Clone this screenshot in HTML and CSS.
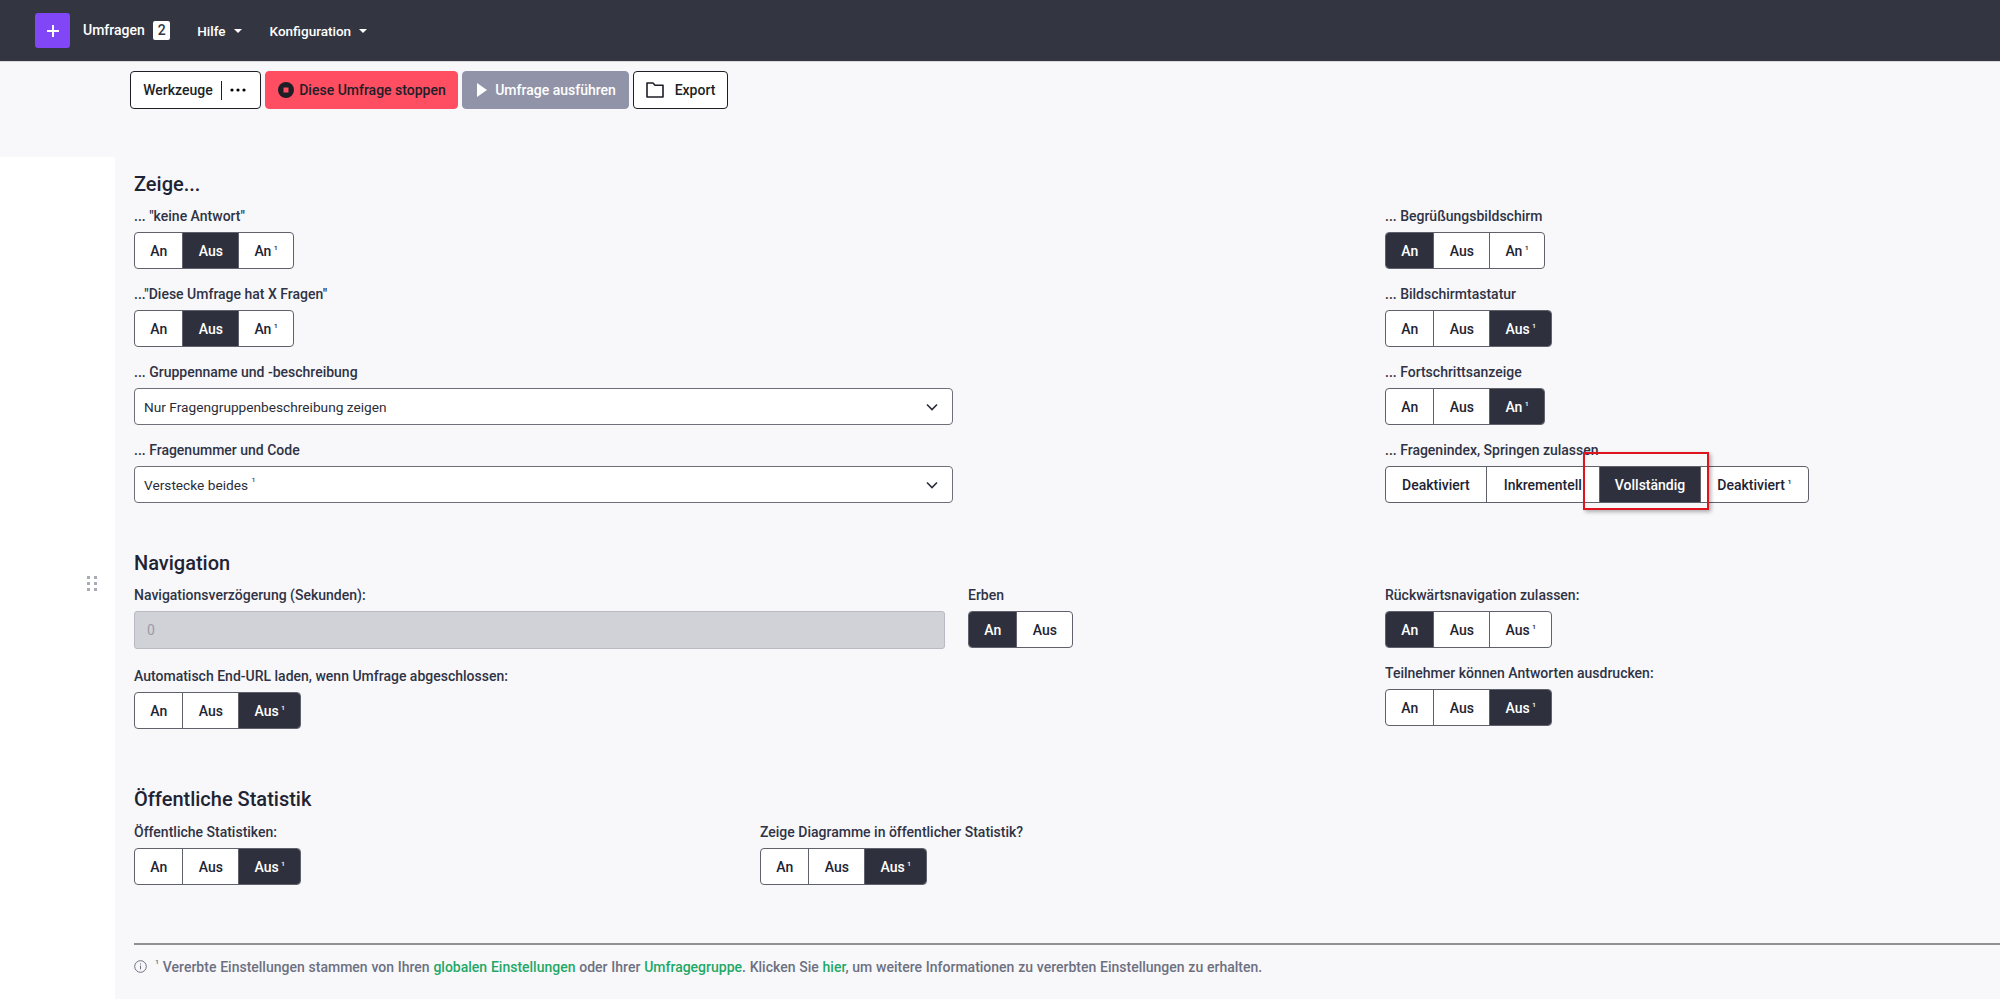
FILE: index.html
```html
<!DOCTYPE html>
<html lang="de">
<head>
    <meta charset="UTF-8">
    <title>Umfrage - Präsentation</title>
    <link rel="stylesheet" href="styles.css">
</head>
<body>
    <header class="topbar">
        <button class="add-btn" type="button">
            <svg width="14" height="14" viewBox="0 0 14 14"><path d="M7 1v12M1 7h12" stroke="#fff" stroke-width="2"/></svg>
        </button>
        <a class="nav-link nav-first">Umfragen <span class="count">2</span></a>
        <a class="nav-link nav-drop">Hilfe</a>
        <a class="nav-link nav-drop">Konfiguration</a>
    </header>

    <div class="toolbar">
        <button class="tool tool-outline tool-menu" type="button">
            <span>Werkzeuge</span>
            <span class="tool-sep"></span>
            <svg width="16" height="4" viewBox="0 0 16 4"><circle cx="2" cy="2" r="1.6"/><circle cx="8" cy="2" r="1.6"/><circle cx="14" cy="2" r="1.6"/></svg>
        </button>
        <button class="tool tool-stop" type="button">
            <svg width="16" height="16" viewBox="0 0 16 16"><circle cx="8" cy="8" r="8" fill="#1d1f27"/><rect x="5.5" y="5.5" width="5" height="5" fill="#ff4d62"/></svg>
            Diese Umfrage stoppen
        </button>
        <button class="tool tool-run" type="button">
            <svg width="10" height="14" viewBox="0 0 10 14"><path d="M0 0l10 7-10 7z" fill="#fff"/></svg>
            Umfrage ausführen
        </button>
        <button class="tool tool-outline tool-export" type="button">
            <svg width="18" height="16" viewBox="0 0 18 16"><path d="M1 1h6l2 2.2h8V15H1z" fill="none" stroke="#1d1f27" stroke-width="1.6" stroke-linejoin="round"/></svg>
            Export
        </button>
    </div>

    <div class="workspace">
        <aside class="side">
            <svg class="drag" width="10" height="15" viewBox="0 0 10 15"><g fill="#a9abb5"><rect width="3" height="3"/><rect x="7" width="3" height="3"/><rect y="6" width="3" height="3"/><rect x="7" y="6" width="3" height="3"/><rect y="12" width="3" height="3"/><rect x="7" y="12" width="3" height="3"/></g></svg>
        </aside>
        <main class="content">
            <h2 class="section-title">Zeige...</h2>
            <section class="grid grid-show">
                <div class="col">
                    <div class="field">
                        <label>... "keine Antwort"</label>
                        <div class="btn-group"><span class="opt">An</span><span class="opt on">Aus</span><span class="opt">An <i>¹</i></span></div>
                    </div>
                    <div class="field">
                        <label>..."Diese Umfrage hat X Fragen"</label>
                        <div class="btn-group"><span class="opt">An</span><span class="opt on">Aus</span><span class="opt">An <i>¹</i></span></div>
                    </div>
                    <div class="field">
                        <label>... Gruppenname und -beschreibung</label>
                        <div class="select">Nur Fragengruppenbeschreibung zeigen
                            <svg width="12" height="8" viewBox="0 0 12 8"><path d="M1 1.5l5 5 5-5" fill="none" stroke="#2a2d38" stroke-width="1.6"/></svg>
                        </div>
                    </div>
                    <div class="field">
                        <label>... Fragenummer und Code</label>
                        <div class="select"><span>Verstecke beides <i>¹</i></span>
                            <svg width="12" height="8" viewBox="0 0 12 8"><path d="M1 1.5l5 5 5-5" fill="none" stroke="#2a2d38" stroke-width="1.6"/></svg>
                        </div>
                    </div>
                </div>
                <div class="col">
                    <div class="field">
                        <label>... Begrüßungsbildschirm</label>
                        <div class="btn-group"><span class="opt on">An</span><span class="opt">Aus</span><span class="opt">An <i>¹</i></span></div>
                    </div>
                    <div class="field">
                        <label>... Bildschirmtastatur</label>
                        <div class="btn-group"><span class="opt">An</span><span class="opt">Aus</span><span class="opt on">Aus <i>¹</i></span></div>
                    </div>
                    <div class="field">
                        <label>... Fortschrittsanzeige</label>
                        <div class="btn-group"><span class="opt">An</span><span class="opt">Aus</span><span class="opt on">An <i>¹</i></span></div>
                    </div>
                    <div class="field field-index">
                        <label>... Fragenindex, Springen zulassen</label>
                        <div class="btn-group btn-group-wide"><span class="opt">Deaktiviert</span><span class="opt opt-loose">Inkrementell</span><span class="opt opt-tight on">Vollständig</span><span class="opt">Deaktiviert <i>¹</i></span></div>
                        <div class="highlight"></div>
                    </div>
                </div>
            </section>

            <h2 class="section-title title-nav">Navigation</h2>
            <section class="grid grid-nav">
                <div class="col">
                    <div class="field field-input">
                        <label>Navigationsverzögerung (Sekunden):</label>
                        <div class="input-off">0</div>
                    </div>
                    <div class="field">
                        <label>Automatisch End-URL laden, wenn Umfrage abgeschlossen:</label>
                        <div class="btn-group"><span class="opt">An</span><span class="opt">Aus</span><span class="opt on">Aus <i>¹</i></span></div>
                    </div>
                </div>
                <div class="col">
                    <div class="field">
                        <label>Erben</label>
                        <div class="btn-group"><span class="opt on">An</span><span class="opt">Aus</span></div>
                    </div>
                </div>
                <div class="col">
                    <div class="field">
                        <label>Rückwärtsnavigation zulassen:</label>
                        <div class="btn-group"><span class="opt on">An</span><span class="opt">Aus</span><span class="opt">Aus <i>¹</i></span></div>
                    </div>
                    <div class="field">
                        <label>Teilnehmer können Antworten ausdrucken:</label>
                        <div class="btn-group"><span class="opt">An</span><span class="opt">Aus</span><span class="opt on">Aus <i>¹</i></span></div>
                    </div>
                </div>
            </section>

            <h2 class="section-title title-stats">Öffentliche Statistik</h2>
            <section class="grid grid-stats">
                <div class="field">
                    <label>Öffentliche Statistiken:</label>
                    <div class="btn-group"><span class="opt">An</span><span class="opt">Aus</span><span class="opt on">Aus <i>¹</i></span></div>
                </div>
                <div class="field">
                    <label>Zeige Diagramme in öffentlicher Statistik?</label>
                    <div class="btn-group"><span class="opt">An</span><span class="opt">Aus</span><span class="opt on">Aus <i>¹</i></span></div>
                </div>
            </section>

            <footer class="note">
                <svg width="13" height="13" viewBox="0 0 13 13"><circle cx="6.5" cy="6.5" r="5.8" fill="none" stroke="#6d7080"/><path d="M6.5 5.6v3.8M6.5 3.4v1.1" stroke="#6d7080"/></svg>
                <span><i>¹</i> Vererbte Einstellungen stammen von Ihren <a>globalen Einstellungen</a> oder Ihrer <a>Umfragegruppe</a>. Klicken Sie <a>hier</a>, um weitere Informationen zu vererbten Einstellungen zu erhalten.</span>
            </footer>
        </main>
    </div>
</body>
</html>
```

FILE: styles.css
```css
html, body {
    height: 100%;
}
body {
    margin: 0;
    overflow: hidden;
    background: #f8f8fb;
    color: #2f3345;
    font-family: Roboto, "Noto Sans", sans-serif;
    font-size: 14px;
}
i {
    font-style: normal;
    font-size: 11px;
    vertical-align: 4px;
    opacity: 0.85;
}

.topbar {
    display: flex;
    align-items: center;
    height: 61px;
    padding-left: 35px;
    background: #333641;
    border-bottom: 1px solid #d9d9de;
    color: #fff;
    font-weight: 500;
}
.add-btn {
    display: flex;
    align-items: center;
    justify-content: center;
    width: 35px;
    height: 35px;
    padding: 0;
    border: none;
    border-radius: 3px;
    background: #8146f6;
}
.nav-link {
    margin-left: 28px;
}
.nav-first {
    margin-left: 13px;
    margin-right: -1px;
}
.count {
    display: inline-block;
    width: 17px;
    margin-left: 5px;
    border-radius: 2px;
    background: #fff;
    color: #333641;
    line-height: 19px;
    text-align: center;
}
.nav-drop {
    font-size: 13.5px;
}
.nav-drop::after {
    content: "";
    display: inline-block;
    margin-left: 8px;
    vertical-align: 3px;
    border-top: 4px solid #fff;
    border-left: 4px solid transparent;
    border-right: 4px solid transparent;
}

.toolbar {
    display: flex;
    gap: 4px;
    height: 38px;
    margin-top: 9px;
    margin-bottom: 48px;
    padding-left: 130px;
}
.tool {
    display: flex;
    align-items: center;
    justify-content: center;
    gap: 6px;
    height: 38px;
    padding: 0;
    border: 1px solid #1d1f27;
    border-radius: 4px;
    background: #fff;
    color: #1d1f27;
    font-family: inherit;
    font-size: 14px;
    font-weight: 500;
}
.tool-menu {
    width: 131px;
    gap: 8px;
    padding-right: 2px;
}
.tool-sep {
    width: 1px;
    height: 19px;
    background: #1d1f27;
}
.tool-stop {
    width: 193px;
    gap: 5px;
    padding-left: 1px;
    border-color: #ff4d62;
    background: #ff4d62;
}
.tool-run {
    width: 167px;
    gap: 8px;
    padding-left: 2px;
    border-color: #9194a8;
    background: #9194a8;
    color: #fff;
}
.tool-export {
    width: 95px;
    gap: 11px;
}

.workspace {
    display: flex;
    height: 842px;
}
.side {
    position: relative;
    flex: 0 0 115px;
    background: #fff;
}
.drag {
    position: absolute;
    left: 87px;
    top: 419px;
}
.content {
    flex: 1;
    min-width: 0;
    padding: 14px 0 0 19px;
}

.section-title {
    margin: 0 0 9px;
    color: #1e2433;
    font-size: 20px;
    font-weight: 500;
    line-height: 26px;
}
.title-nav {
    margin-top: 32px;
}
.title-stats {
    margin-top: 42px;
    margin-bottom: 10px;
}

.grid {
    display: grid;
}
.grid-show {
    grid-template-columns: 1251px 1fr;
}
.grid-show .col:first-child {
    padding-right: 432px;
}
.grid-nav {
    grid-template-columns: 834px 417px 1fr;
}
.grid-nav .col:first-child {
    padding-right: 23px;
}
.grid-stats {
    grid-template-columns: 626px 1fr;
}

.field {
    margin-bottom: 15px;
}
.field-input {
    margin-bottom: 17px;
}
.field-index {
    position: relative;
    margin-bottom: 0;
}
.field label {
    display: block;
    margin-bottom: 6px;
    font-weight: 500;
    line-height: 20px;
    white-space: nowrap;
}

.btn-group {
    display: inline-flex;
    height: 37px;
    box-sizing: border-box;
    border: 1px solid #5f616b;
    border-radius: 4px;
    background: #fff;
    overflow: hidden;
}
.opt {
    display: flex;
    align-items: center;
    padding: 0 15.25px;
    border-left: 1px solid #5f616b;
    color: #1e2433;
    font-weight: 500;
    white-space: pre;
}
.opt:first-child {
    border-left: none;
}
.btn-group-wide .opt {
    padding: 0 16px;
}
.btn-group-wide .opt-loose {
    padding: 0 17px;
}
.btn-group-wide .opt-tight {
    padding: 0 15px;
}
.opt.on {
    background: #2e313d;
    color: #fff;
}
.opt i {
    margin-left: -1px;
}

.select {
    display: flex;
    align-items: center;
    justify-content: space-between;
    box-sizing: border-box;
    height: 37px;
    padding: 0 14px 0 9px;
    border: 1px solid #6e7079;
    border-radius: 4px;
    background: #fff;
    color: #2a2d38;
    font-size: 13.7px;
}

.input-off {
    display: flex;
    align-items: center;
    box-sizing: border-box;
    height: 38px;
    padding-left: 12px;
    border: 1px solid #b9bac2;
    border-radius: 3px;
    background: #d1d2d8;
    color: #9a9ca8;
}

.highlight {
    position: absolute;
    left: 198px;
    top: 12px;
    width: 126px;
    height: 58px;
    box-sizing: border-box;
    border: 2px solid #e0141c;
    box-shadow: 2px 2px 4px rgba(0,0,0,0.3);
}

.note {
    display: flex;
    align-items: center;
    gap: 8px;
    margin-top: 43px;
    padding-top: 13px;
    border-top: 2px solid #8f8f94;
    color: #6d7080;
    font-size: 14px;
    font-weight: 500;
    word-spacing: 0.3px;
}
.note a {
    color: #1fa866;
}
```
